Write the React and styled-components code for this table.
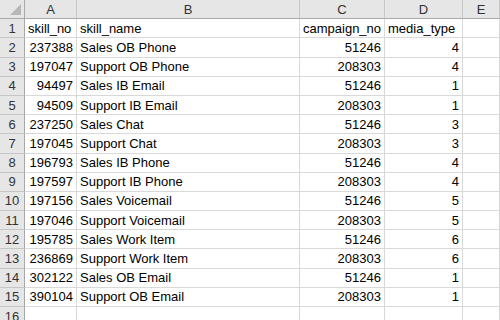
import React from "react";
import styled, { createGlobalStyle } from "styled-components";

const Global = createGlobalStyle`
  html, body { margin: 0; padding: 0; background: #fff; overflow: hidden; }
  body { font-family: "Liberation Sans", Arial, sans-serif; }
`;

const Sheet = styled.div`
  display: grid;
  grid-template-columns: 25px 52px 223px 85px 78px 1fr;
  grid-auto-rows: 19.2px;
  width: 500px;
  height: 320px;
  overflow: hidden;
  font-size: 13px;
  color: #000;
`;

const Cell = styled.div`
  box-sizing: border-box;
  border-right: 1px solid #d9d9d9;
  border-bottom: 1px solid #d9d9d9;
  display: flex;
  align-items: center;
  justify-content: ${(p) => (p.$num ? "flex-end" : "flex-start")};
  padding: 0 3px 0 3px;
  white-space: nowrap;
  overflow: hidden;
  line-height: 1;
`;

const ColHead = styled.div`
  box-sizing: border-box;
  background: #e6e6e6;
  border-right: 1px solid #c6c6c6;
  border-bottom: 1px solid #a8a8a8;
  display: flex;
  align-items: center;
  justify-content: center;
  color: #333;
  font-size: 13px;
`;

const RowHead = styled.div`
  box-sizing: border-box;
  background: #e6e6e6;
  border-right: 1px solid #a8a8a8;
  border-bottom: 1px solid #c6c6c6;
  display: flex;
  align-items: center;
  justify-content: center;
  color: #333;
  font-size: 13px;
`;

const Corner = styled(ColHead)`
  border-right: 1px solid #a8a8a8;
  justify-content: flex-end;
  align-items: flex-end;
  padding: 0 3px 3px 0;
`;

const data = [
  [237388, "Sales OB Phone", 51246, 4],
  [197047, "Support OB Phone", 208303, 4],
  [94497, "Sales IB Email", 51246, 1],
  [94509, "Support IB Email", 208303, 1],
  [237250, "Sales Chat", 51246, 3],
  [197045, "Support Chat", 208303, 3],
  [196793, "Sales IB Phone", 51246, 4],
  [197597, "Support IB Phone", 208303, 4],
  [197156, "Sales Voicemail", 51246, 5],
  [197046, "Support Voicemail", 208303, 5],
  [195785, "Sales Work Item", 51246, 6],
  [236869, "Support Work Item", 208303, 6],
  [302122, "Sales OB Email", 51246, 1],
  [390104, "Support OB Email", 208303, 1],
];

export default function App() {
  return (
    <>
      <Global />
      <Sheet>
        <Corner>
          <svg width="11" height="11" viewBox="0 0 11 11">
            <polygon points="11,0 11,11 0,11" fill="#b7b7b7" />
          </svg>
        </Corner>
        {["A", "B", "C", "D", "E"].map((c) => (
          <ColHead key={c}>{c}</ColHead>
        ))}
        <RowHead>1</RowHead>
        <Cell>skill_no</Cell>
        <Cell>skill_name</Cell>
        <Cell>campaign_no</Cell>
        <Cell>media_type</Cell>
        <Cell />
        {data.map((r, i) => (
          <React.Fragment key={i}>
            <RowHead>{i + 2}</RowHead>
            <Cell $num>{r[0]}</Cell>
            <Cell>{r[1]}</Cell>
            <Cell $num>{r[2]}</Cell>
            <Cell $num>{r[3]}</Cell>
            <Cell />
          </React.Fragment>
        ))}
        <RowHead>16</RowHead>
        <Cell />
        <Cell />
        <Cell />
        <Cell />
        <Cell />
      </Sheet>
    </>
  );
}
